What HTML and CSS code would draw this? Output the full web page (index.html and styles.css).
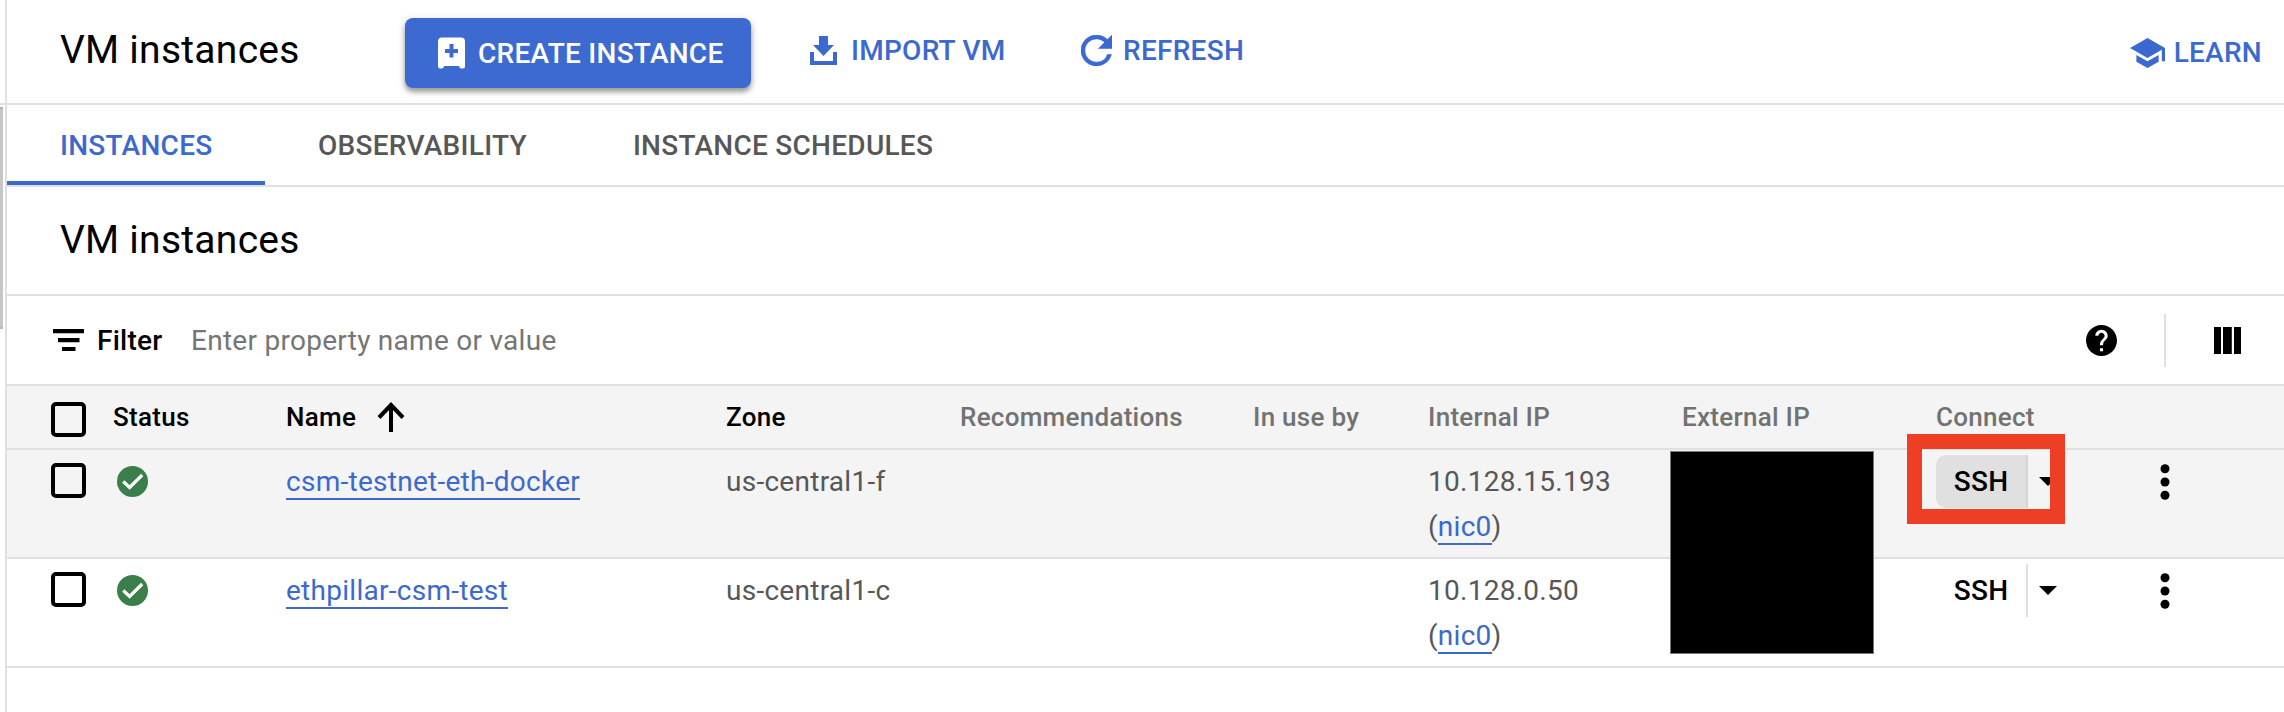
FILE: index.html
```html
<!DOCTYPE html>
<html lang="en">
<head>
<meta charset="utf-8">
<title>VM instances</title>
<link rel="stylesheet" href="styles.css">
</head>
<body>
<div class="rail"><div class="rail-head"></div><div class="rail-thumb"></div></div>
<main class="page">
  <header class="topbar">
    <h1 class="title">VM instances</h1>
    <button class="btn create">
      <svg width="27" height="32" viewBox="0 0 27 32"><path fill="#fff" fill-rule="evenodd" d="M4 0.500H23Q27 0.500 27 4.500V29.500Q27 31.500 25 31.500H23.500Q21.500 31.500 21 29H6Q5.500 31.500 3.500 31.500H2Q0 31.500 0 29.500V4.500Q0 0.500 4 0.500ZM11.500 7V12H7V16H11.500V20.500H15.500V16H20V12H15.500V7Z"/></svg>
      <span>CREATE INSTANCE</span>
    </button>
    <button class="btn import">
      <svg width="27" height="29" viewBox="0 0 27 29"><path fill="currentColor" d="M9 0H18V9H24L13.500 20L3 9H9ZM0 16H4V25H23V16H27V29H0Z"/></svg>
      <span>IMPORT VM</span>
    </button>
    <button class="btn refresh">
      <svg width="31" height="31" viewBox="4 4 16 16"><path fill="currentColor" stroke="currentColor" stroke-width=".3" d="M17.650 6.350A7.958 7.958 0 0 0 12 4a8 8 0 1 0 7.730 10h-2.080A5.990 5.990 0 0 1 12 18a6 6 0 1 1 0-12c1.660 0 3.140.690 4.220 1.780L13 11h7V4z"/></svg>
      <span>REFRESH</span>
    </button>
    <button class="btn learn">
      <svg width="35" height="30" viewBox="1 3 22 18" preserveAspectRatio="none"><path fill="currentColor" d="M5 13.180v4L12 21l7-3.820v-4L12 17zM12 3 1 9l11 6 9-4.910V17h2V9z"/></svg>
      <span>LEARN</span>
    </button>
  </header>
  <nav class="tabs">
    <a class="tab active">INSTANCES</a>
    <a class="tab">OBSERVABILITY</a>
    <a class="tab">INSTANCE SCHEDULES</a>
  </nav>
  <h2 class="subtitle">VM instances</h2>
  <div class="filterbar">
    <svg class="filter-icon" width="31" height="22" viewBox="0 0 31 22"><path d="M0 0H31V4.300H0ZM5 9H26.500V13.300H5ZM9 18H22.500V22H9Z"/></svg>
    <span class="filter-label">Filter</span>
    <span class="placeholder">Enter property name or value</span>
    <svg class="help" width="31" height="31" viewBox="2 2 20 20"><path d="M12 2C6.480 2 2 6.480 2 12s4.480 10 10 10 10-4.480 10-10S17.520 2 12 2zm1 17h-2v-2h2zm2.070-7.750-.9.920C13.450 12.900 13 13.500 13 15h-2v-.5c0-1.100.450-2.100 1.170-2.830l1.240-1.260c.370-.360.590-.860.590-1.410 0-1.100-.9-2-2-2s-2 .9-2 2H8c0-2.210 1.790-4 4-4s4 1.790 4 4c0 .880-.360 1.680-.930 2.250z"/></svg>
    <i class="divider"></i>
    <svg class="cols" width="27" height="27" viewBox="0 0 27 27"><path d="M0 0H7V27H0ZM9 0H17.800V27H9ZM20 0H27V27H20Z"/></svg>
  </div>
  <section class="table">
    <div class="row head">
      <i class="check"></i>
      <span class="on">Status</span>
      <span class="on name">Name<svg width="28" height="30" viewBox="0 0 28 30"><path d="M14 2.500V30M2 15.500 14 3 26 15.500" fill="none" stroke="#000" stroke-width="4"/></svg></span>
      <span class="on">Zone</span>
      <span>Recommendations</span>
      <span>In use by</span>
      <span>Internal IP</span>
      <span>External IP</span>
      <span>Connect</span>
    </div>
    <div class="row hover">
      <i class="check"></i>
      <svg class="ok" width="31" height="31" viewBox="0 0 31 31"><circle cx="15.500" cy="15.500" r="15.500" fill="#3a7e49"/><path d="M6.300 15.500 12.600 21.500 25.200 9" fill="none" stroke="#fff" stroke-width="3.200"/></svg>
      <span><a class="link">csm-testnet-eth-docker</a></span>
      <span>us-central1-f</span>
      <span></span><span></span>
      <span>10.128.15.193<br>(<a class="link">nic0</a>)</span>
      <span></span>
      <div class="ssh pressed"><button>SSH</button><svg width="18" height="9" viewBox="0 0 18 9"><path d="M0 0H18L9 9Z"/></svg></div>
      <svg class="more" width="10" height="36" viewBox="0 0 10 36"><circle cx="5" cy="4.800" r="4.500"/><circle cx="5" cy="18" r="4.500"/><circle cx="5" cy="31.200" r="4.500"/></svg>
    </div>
    <div class="row">
      <i class="check"></i>
      <svg class="ok" width="31" height="31" viewBox="0 0 31 31"><circle cx="15.500" cy="15.500" r="15.500" fill="#3a7e49"/><path d="M6.300 15.500 12.600 21.500 25.200 9" fill="none" stroke="#fff" stroke-width="3.200"/></svg>
      <span><a class="link">ethpillar-csm-test</a></span>
      <span>us-central1-c</span>
      <span></span><span></span>
      <span>10.128.0.50<br>(<a class="link">nic0</a>)</span>
      <span></span>
      <div class="ssh"><button>SSH</button><svg width="18" height="9" viewBox="0 0 18 9"><path d="M0 0H18L9 9Z"/></svg></div>
      <svg class="more" width="10" height="36" viewBox="0 0 10 36"><circle cx="5" cy="4.800" r="4.500"/><circle cx="5" cy="18" r="4.500"/><circle cx="5" cy="31.200" r="4.500"/></svg>
    </div>
    <div class="redaction"></div>
    <div class="callout"></div>
  </section>
</main>
</body>
</html>
```
FILE: styles.css
```css
* { box-sizing: border-box; }
body { margin: 0; width: 2284px; height: 712px; overflow: hidden; display: flex; background: #fff; font-family: Roboto, "Liberation Sans", sans-serif; font-size: 28px; letter-spacing: .27px; color: #000; }
svg { display: block; flex: none; }
button { border: 0; background: none; padding: 0; font: inherit; letter-spacing: inherit; color: inherit; }
.rail { width: 7px; border-right: 2px solid #e0e0e0; flex: none; }
.rail-head { height: 105px; border-bottom: 2px solid #e0e0e0; }
.rail-thumb { width: 3px; height: 222px; margin-top: 2px; background: #c6c6c6; border-top: 2px solid #b0b0b0; border-bottom: 2px solid #b8b8b8; }
.page { flex: 1; min-width: 0; }
.topbar { height: 105px; border-bottom: 2px solid #e0e0e0; display: flex; align-items: flex-start; padding: 18px 22px 0 53px; }
.title, .subtitle { margin: 0; font-size: 39px; font-weight: 400; line-height: 46px; white-space: nowrap; }
.title { width: 345px; padding-top: 9px; }
.btn { display: flex; align-items: center; font-weight: 500; color: #3b69d0; line-height: 32px; white-space: nowrap; }
.btn span { padding-top: 1px; }
.create { width: 346px; height: 70px; padding-left: 33px; gap: 13px; background: #3d6ad0; color: #fff; border-radius: 8px; box-shadow: 0 4px 5px rgba(0,0,0,.3), 0 2px 8px rgba(0,0,0,.18); }
.create span { padding-top: 2px; }
.import { margin: 16px 0 0 59px; gap: 14px; width: 271px; }
.refresh { margin-top: 16px; gap: 11px; }
.learn { margin: 18px 0 0 auto; gap: 9px; }
.tabs { height: 82px; border-bottom: 2px solid #e0e0e0; display: flex; font-weight: 500; color: #575757; }
.tab { padding: 0 53px; line-height: 81px; height: 80px; white-space: nowrap; }
.tab.active { width: 258px; color: #3b69d0; border-bottom: 4px solid #3b69d0; }
.subtitle { height: 109px; border-bottom: 2px solid #e0e0e0; padding: 30px 53px 0; }
.filterbar { height: 90px; border-bottom: 2px solid #e0e0e0; display: flex; align-items: center; padding: 0 43px 0 46px; white-space: nowrap; }
.filter-label { font-weight: 500; margin-left: 13px; width: 94px; }
.placeholder { color: #757575; }
.help { margin-left: auto; }
.divider { width: 2px; height: 53px; background: #e0e0e0; margin: 0 48px 0 47px; }
.table { position: relative; }
.row { display: grid; grid-template-columns: 62px 173px 440px 234px 293px 175px 254px 254px 224px 1fr; height: 109px; padding-left: 44px; border-bottom: 2px solid #e0e0e0; color: #575757; align-items: start; line-height: 45px; white-space: nowrap; }
.row.hover, .row.head { background: #f4f4f4; }
.row.head { height: 64px; font-size: 26px; font-weight: 500; color: #727272; line-height: 60px; }
.row .on { color: #000; }
.name { display: flex; align-items: center; gap: 21px; }
.check { width: 35px; height: 35px; border: 4px solid #000; border-radius: 5px; margin-top: 13px; }
.head .check { margin-top: 16px; }
.ok { margin: 16px 0 0 4px; }
.row > span { padding-top: 9px; }
.row.head > span { padding-top: 1px; }
.link { color: #3b69d0; border-bottom: 2px solid #3b69d0; }
.ssh { display: flex; align-items: center; height: 53px; margin-top: 5px; color: #000; font-weight: 500; }
.ssh button { width: 92px; height: 53px; border-right: 2px solid #e0e0e0; }
.ssh svg { margin-left: 11px; }
.pressed button { background: #e0e0e0; border-color: #d4d4d4; border-radius: 10px 0 0 10px; }
.more { margin-top: 14px; }
.redaction { position: absolute; left: 1663px; top: 65px; width: 204px; height: 203px; background: #000; border: 1px solid #777; }
.callout { position: absolute; left: 1900px; top: 48px; width: 158px; height: 90px; border: 15px solid #ec3f25; }
```
